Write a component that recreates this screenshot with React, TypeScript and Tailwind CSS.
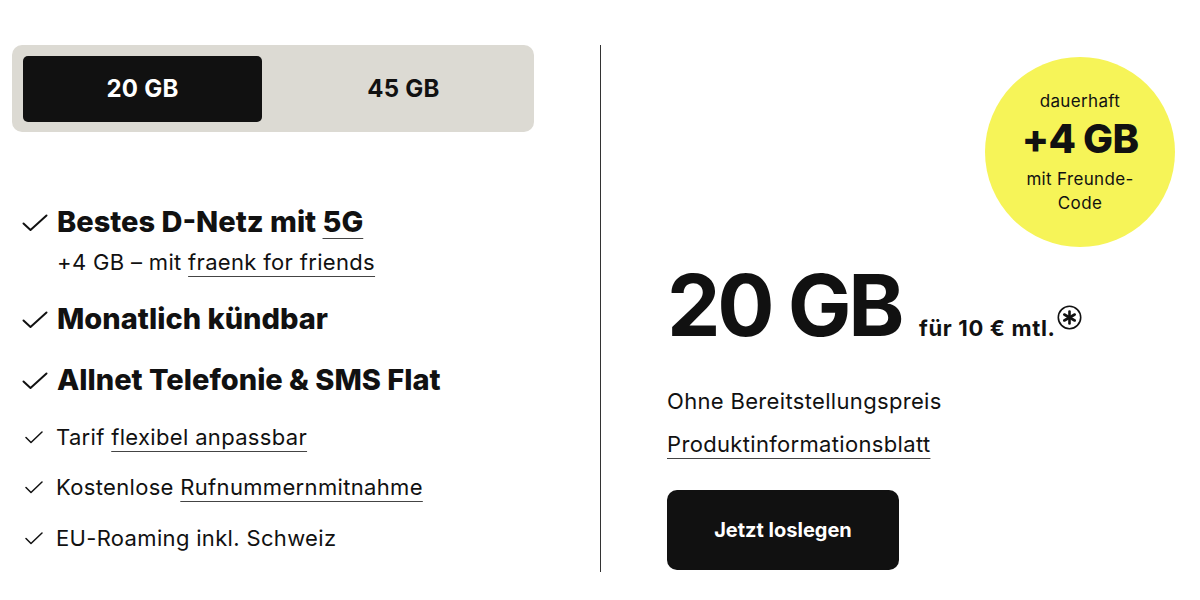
import React from "react";

function Check({ big }: { big?: boolean }) {
    return big ? (
        <svg width="26" height="18" viewBox="0 0 26 18" fill="none" className="shrink-0">
            <path d="M1.5 9.5 L8.5 16 L24.5 1.5" stroke="#111" strokeWidth="2" strokeLinecap="round" strokeLinejoin="round" />
        </svg>
    ) : (
        <svg width="18" height="13" viewBox="0 0 18 13" fill="none" className="shrink-0">
            <path d="M1 6.5 L6 11.5 L17 1" stroke="#111" strokeWidth="1.5" strokeLinecap="round" strokeLinejoin="round" />
        </svg>
    );
}

const link = "underline decoration-1 underline-offset-[6px] decoration-[#444]";
const body = "text-[22px] leading-[28px] tracking-[0.015em]";
const head = "text-[29px] leading-[36px] font-extrabold";

function App() {
    return (
        <div className="w-[1200px] h-[600px] bg-white text-[#111] font-['Inter',sans-serif] overflow-hidden">
            <div className="flex pt-[45px]">
                {/* Left column */}
                <div className="w-[600px] pl-3">
                    <div className="w-[522px] h-[87px] bg-[#dcdad3] rounded-[10px] p-[11px] flex">
                        <button className="w-[239px] h-[66px] bg-[#111] text-white rounded-[5px] text-[24px] font-bold tracking-[0.01em]">20 GB</button>
                        <button className="flex-1 h-[66px] pl-[22px] text-[24px] font-bold tracking-[0.01em]">45 GB</button>
                    </div>

                    <ul className="mt-[72px] pl-[10px] flex flex-col">
                        <li className="flex items-start gap-[9px]">
                            <span className="mt-[10px]"><Check big /></span>
                            <div>
                                <div className={head}>
                                    Bestes D-Netz mit <span className={link}>5G</span>
                                </div>
                                <div className={`mt-2 ${body}`}>
                                    +4 GB – mit <span className={link}>fraenk for friends</span>
                                </div>
                            </div>
                        </li>
                        <li className="mt-[25px] flex items-start gap-[9px]">
                            <span className="mt-[10px]"><Check big /></span>
                            <div className={head}>Monatlich kündbar</div>
                        </li>
                        <li className="mt-[25px] flex items-start gap-[9px]">
                            <span className="mt-[10px]"><Check big /></span>
                            <div className={head}>Allnet Telefonie &amp; SMS Flat</div>
                        </li>
                        <li className="mt-[25px] flex items-center gap-[13px] pl-[3px]">
                            <Check />
                            <div className={body}>
                                Tarif <span className={link}>flexibel anpassbar</span>
                            </div>
                        </li>
                        <li className="mt-[22px] flex items-center gap-[13px] pl-[3px]">
                            <Check />
                            <div className={body}>
                                Kostenlose <span className={link}>Rufnummernmitnahme</span>
                            </div>
                        </li>
                        <li className="mt-[23px] flex items-center gap-[13px] pl-[3px]">
                            <Check />
                            <div className={body}>EU-Roaming inkl. Schweiz</div>
                        </li>
                    </ul>
                </div>

                {/* Divider */}
                <div className="w-px h-[527px] bg-[#333]" />

                {/* Right column */}
                <div className="relative flex-1 pl-[66px]">
                    <div className="absolute left-[384px] top-[12px] w-[190px] h-[190px] rounded-full bg-[#f6f458] flex flex-col items-center justify-center text-center">
                        <div className="text-[17px] leading-[24px] tracking-[0.02em]">dauerhaft</div>
                        <div className="text-[40px] leading-[44px] font-extrabold tracking-[-0.02em] mt-[4px]">+4 GB</div>
                        <div className="text-[17px] leading-[24px] tracking-[0.02em] mt-[6px]">mit Freunde-<br />Code</div>
                    </div>

                    <div className="mt-[218px] flex items-baseline">
                        <span className="text-[85px] leading-none font-bold tracking-[-0.04em]">20 GB</span>
                        <span className="ml-[18px] text-[22px] font-bold tracking-[0.03em] whitespace-nowrap">
                            für 10 € mtl.
                            <svg width="25" height="25" viewBox="0 0 25 25" className="inline-block align-[6px] ml-[1px]">
                                <circle cx="12.5" cy="12.5" r="11.2" fill="none" stroke="#111" strokeWidth="1.6" />
                                <g stroke="#111" strokeWidth="2.6" strokeLinecap="round">
                                    <line x1="12.5" y1="6.5" x2="12.5" y2="18.5" />
                                    <line x1="7.3" y1="9.5" x2="17.7" y2="15.5" />
                                    <line x1="7.3" y1="15.5" x2="17.7" y2="9.5" />
                                </g>
                            </svg>
                        </span>
                    </div>

                    <div className={`mt-[39px] ${body}`}>Ohne Bereitstellungspreis</div>
                    <div className={`mt-[15px] ${body}`}>
                        <span className={link}>Produktinformationsblatt</span>
                    </div>

                    <button className="mt-[32px] w-[232px] h-[80px] bg-[#111] text-white rounded-[10px] text-[20px] font-bold">
                        Jetzt loslegen
                    </button>
                </div>
            </div>
        </div>
    );
}

export default App;
